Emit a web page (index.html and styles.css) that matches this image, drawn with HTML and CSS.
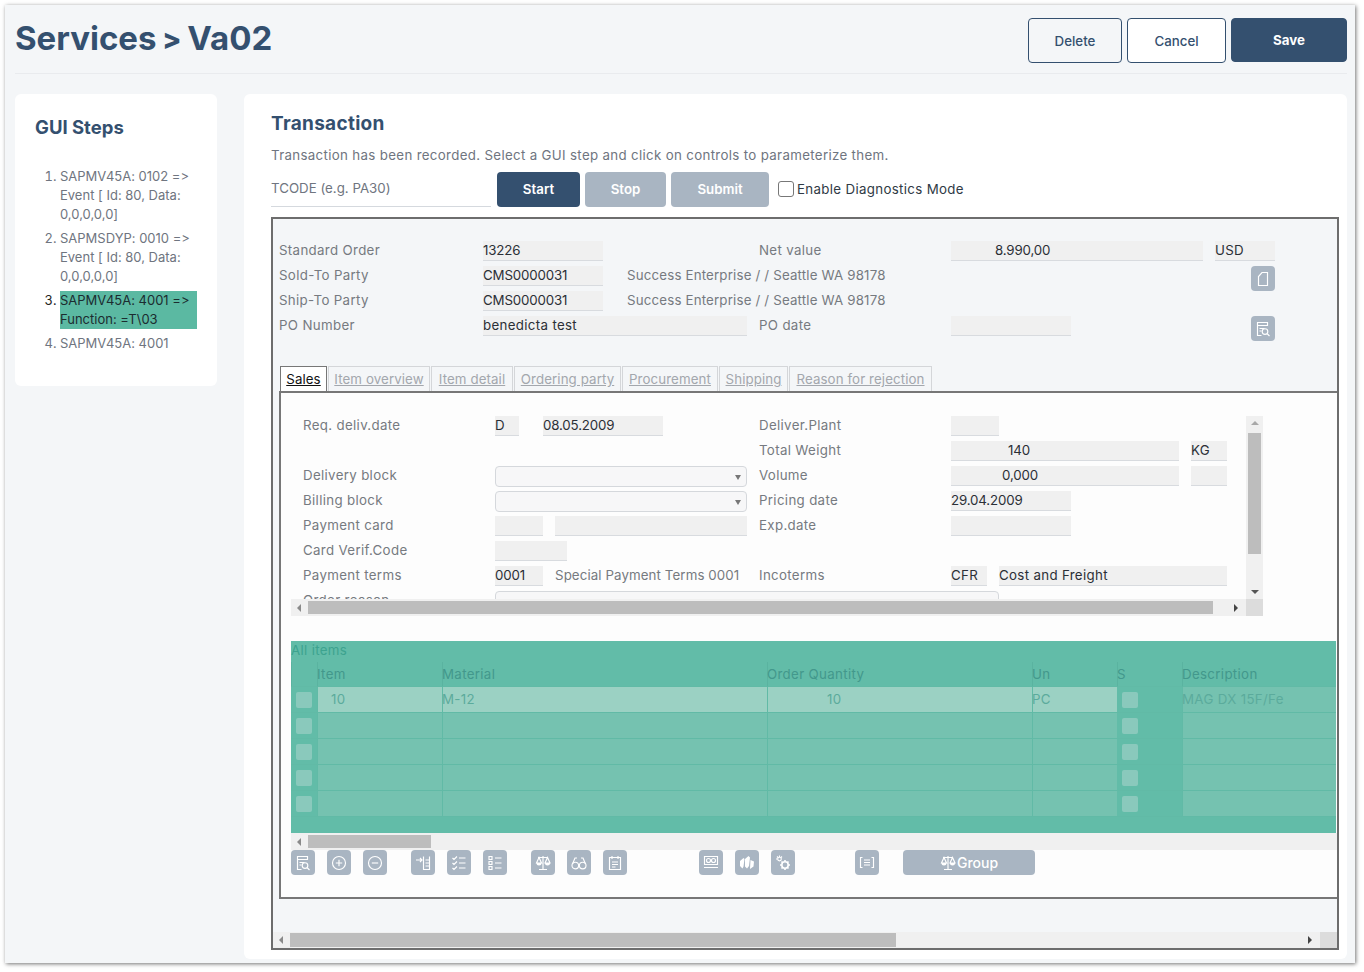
FILE: index.html
```html
<!DOCTYPE html>
<html lang="en">
<head>
    <meta charset="UTF-8">
    <title>Services > Va02</title>
    <link rel="stylesheet" href="styles.css">
</head>
<body>
    <svg class="sprites" width="0" height="0">
        <symbol id="i-doc" viewBox="0 0 16 16"><path d="M7 1.500h5.500v13h-9V5.500z"/></symbol>
        <symbol id="i-report" viewBox="0 0 16 16"><path d="M2.500 1.500h10v3h-10zM2.500 4.500v10h4M4.500 7.500h5M4.500 10h2"/><circle cx="10" cy="10.500" r="2.800"/><path d="M12 12.500l2.500 2.500"/></symbol>
        <symbol id="i-plus" viewBox="0 0 16 16"><circle cx="8" cy="8" r="6.500"/><path d="M8 4.800v6.400M4.800 8h6.400"/></symbol>
        <symbol id="i-minus" viewBox="0 0 16 16"><circle cx="8" cy="8" r="6.500"/><path d="M4.800 8h6.400"/></symbol>
        <symbol id="i-insert" viewBox="0 0 16 16"><path d="M1 5h6M5 3l2 2-2 2M8.500 1.500v13h6v-13M10.500 5h4M10.500 8h4M10.500 11h4"/></symbol>
        <symbol id="i-checks" viewBox="0 0 16 16"><path d="M1.500 3l1.500 1.500L6 1.500M1.500 8l1.500 1.500L6 6.500M1.500 13l1.500 1.500L6 11.500M8 3h6.500M8 8h6.500M8 13h6.500"/></symbol>
        <symbol id="i-bullets" viewBox="0 0 16 16"><path d="M2 1.500h3v3H2zM2 6.500h3v3H2zM2 11.500h3v3H2zM8 3h6.500M8 8h6.500M8 13h6.500"/></symbol>
        <symbol id="i-scales" viewBox="0 0 16 16"><path class="solid" d="M1.500 8h5a2.500 2.500 0 0 1-5 0zM10 8h5a2.500 2.500 0 0 1-5 0z"/><path d="M8 1v13M4 14.500h8M3 2.500h10M4 2.500L1.500 8h5zM12.500 2.500L10 8h5z"/></symbol>
        <symbol id="i-glasses" viewBox="0 0 16 16"><circle cx="4.300" cy="10.500" r="3.300"/><circle cx="11.700" cy="10.500" r="3.300"/><path d="M7.500 10c.3-.5.700-.5 1 0M1.500 9L4 3h2M14.500 9L12 3h-2"/></symbol>
        <symbol id="i-note" viewBox="0 0 16 16"><path d="M2.500 2.500h11v12h-11zM5 1v3M11 1v3M5 7h6M5 9.500h6M5 12h3.500"/></symbol>
        <symbol id="i-money" viewBox="0 0 16 16"><path d="M1.500 1.500h13v8h-13zM1 12.500h14"/><circle cx="5.500" cy="5.500" r="2"/><circle cx="10.500" cy="5.500" r="2"/></symbol>
        <symbol id="i-boxes" viewBox="0 0 16 16"><path class="solid" d="M1 6l3.500-3 1 1-1 7.500-1 2L1 11zM6 4l3.500-3 1.500 1.500-1 8.500-2 2.500L6 11.500zM11.500 5L15 6.500l-.5 5-3.500 2.500z"/></symbol>
        <symbol id="i-gears" viewBox="0 0 16 16"><circle cx="4.500" cy="4" r="1.800"/><circle class="thick" cx="10" cy="10" r="3.200"/><path class="thick" d="M10 5v1.500M10 13.500V15M5 10h1.500M13.500 10H15M6.500 6.500l1 1M12.500 12.500l1 1M13.500 6.500l-1 1M7.500 12.500l-1 1"/><path d="M4.500.5v1.500M1 4h1.500M2 1.500l1 1M7 1.500l-1 1"/></symbol>
        <symbol id="i-bracket" viewBox="0 0 16 16"><path d="M3.500 2.500H1.500v10h2M12.500 2.500h2v10h-2M5 5h6M5 7.500h6M5 10h6"/></symbol>
    </svg>

    <div class="window">
        <header class="page-header">
            <h1>Services <span class="crumb">&gt;</span> Va02</h1>
            <div class="header-actions">
                <button class="btn btn-delete">Delete</button>
                <button class="btn btn-cancel">Cancel</button>
                <button class="btn btn-save">Save</button>
            </div>
        </header>

        <div class="columns">
            <aside class="steps card">
                <h2>GUI Steps</h2>
                <ol>
                    <li>SAPMV45A: 0102 =&gt; Event [ Id: 80, Data: 0,0,0,0,0]</li>
                    <li>SAPMSDYP: 0010 =&gt; Event [ Id: 80, Data: 0,0,0,0,0]</li>
                    <li class="active"><span>SAPMV45A: 4001 =&gt; Function: =T\03</span></li>
                    <li>SAPMV45A: 4001</li>
                </ol>
            </aside>

            <main class="transaction card">
                <h2>Transaction</h2>
                <p class="hint">Transaction has been recorded. Select a GUI step and click on controls to parameterize them.</p>
                <div class="tcode-bar">
                    <div class="tcode-input">TCODE (e.g. PA30)</div>
                    <button class="btn-small start">Start</button>
                    <button class="btn-small stop">Stop</button>
                    <button class="btn-small submit">Submit</button>
                    <label class="diag"><span class="check"></span>Enable Diagnostics Mode</label>
                </div>

                <div class="sap-frame">
                    <div class="sap-head">
                        <div class="row">
                            <span class="lbl from-1 span-17">Standard Order</span>
                            <span class="fld num from-18 span-10">13226</span>
                            <span class="lbl from-41 span-16">Net value</span>
                            <span class="fld num from-57 span-21 pad-net">8.990,00</span>
                            <span class="fld from-79 span-5">USD</span>
                        </div>
                        <div class="row">
                            <span class="lbl from-1 span-17">Sold-To Party</span>
                            <span class="fld num from-18 span-10">CMS0000031</span>
                            <span class="lbl addr from-30 span-30">Success Enterprise / / Seattle WA 98178</span>
                            <button class="icon-btn from-82 span-2"><svg><use href="#i-doc"/></svg></button>
                        </div>
                        <div class="row">
                            <span class="lbl from-1 span-17">Ship-To Party</span>
                            <span class="fld num from-18 span-10">CMS0000031</span>
                            <span class="lbl addr from-30 span-30">Success Enterprise / / Seattle WA 98178</span>
                        </div>
                        <div class="row">
                            <span class="lbl from-1 span-17">PO Number</span>
                            <span class="fld from-18 span-22">benedicta test</span>
                            <span class="lbl from-41 span-16">PO date</span>
                            <span class="fld from-57 span-10"></span>
                            <button class="icon-btn from-82 span-2"><svg><use href="#i-report"/></svg></button>
                        </div>
                    </div>

                    <div class="tabs">
                        <a class="tab selected">Sales</a>
                        <a class="tab t-overview">Item overview</a>
                        <a class="tab t-detail">Item detail</a>
                        <a class="tab t-party">Ordering party</a>
                        <a class="tab t-proc">Procurement</a>
                        <a class="tab t-ship">Shipping</a>
                        <a class="tab t-reason">Reason for rejection</a>
                    </div>

                    <div class="tab-panel">
                        <div class="sub-screen">
                            <div class="sub-body">
                                <div class="row">
                                    <span class="lbl from-1 span-16">Req. deliv.date</span>
                                    <span class="fld from-17 span-2">D</span>
                                    <span class="fld num from-21 span-10">08.05.2009</span>
                                    <span class="lbl from-39 span-16">Deliver.Plant</span>
                                    <span class="fld from-55 span-4"></span>
                                </div>
                                <div class="row">
                                    <span class="lbl from-39 span-16">Total Weight</span>
                                    <span class="fld num from-55 span-19 pad-weight">140</span>
                                    <span class="fld from-75 span-3">KG</span>
                                </div>
                                <div class="row">
                                    <span class="lbl from-1 span-16">Delivery block</span>
                                    <span class="select from-17 span-21"></span>
                                    <span class="lbl from-39 span-16">Volume</span>
                                    <span class="fld num from-55 span-19 pad-volume">0,000</span>
                                    <span class="fld from-75 span-3"></span>
                                </div>
                                <div class="row">
                                    <span class="lbl from-1 span-16">Billing block</span>
                                    <span class="select from-17 span-21"></span>
                                    <span class="lbl from-39 span-16">Pricing date</span>
                                    <span class="fld num from-55 span-10">29.04.2009</span>
                                </div>
                                <div class="row">
                                    <span class="lbl from-1 span-16">Payment card</span>
                                    <span class="fld from-17 span-4"></span>
                                    <span class="fld from-22 span-16"></span>
                                    <span class="lbl from-39 span-16">Exp.date</span>
                                    <span class="fld from-55 span-10"></span>
                                </div>
                                <div class="row">
                                    <span class="lbl from-1 span-16">Card Verif.Code</span>
                                    <span class="fld from-17 span-6"></span>
                                </div>
                                <div class="row">
                                    <span class="lbl from-1 span-16">Payment terms</span>
                                    <span class="fld num from-17 span-4">0001</span>
                                    <span class="lbl tight from-22 span-17">Special Payment Terms 0001</span>
                                    <span class="lbl from-39 span-16">Incoterms</span>
                                    <span class="fld from-55 span-3">CFR</span>
                                    <span class="fld from-59 span-19">Cost and Freight</span>
                                </div>
                                <div class="row">
                                    <span class="lbl from-1 span-16">Order reason</span>
                                    <span class="select from-17 span-42"></span>
                                </div>
                            </div>
                            <div class="bar-v">
                                <span class="arrow up"></span>
                                <span class="thumb-v"></span>
                                <span class="arrow down"></span>
                            </div>
                            <div class="bar-h">
                                <span class="arrow left"></span>
                                <span class="thumb-h"></span>
                                <span class="arrow right"></span>
                            </div>
                            <div class="corner"></div>
                        </div>

                        <div class="items-wrap">
                            <div class="items">
                                <div class="items-title">All items</div>
                                <div class="item-row head">
                                    <span></span><span>Item</span><span>Material</span><span>Order Quantity</span><span>Un</span><span>S</span><span>Description</span>
                                </div>
                                <div class="item-row first">
                                    <span class="sel"><i></i></span><span class="cell lit pad-item">10</span><span class="cell lit">M-12</span><span class="cell lit pad-qty">10</span><span class="cell lit">PC</span><span class="sel"><i></i></span><span class="cell">MAG DX 15F/Fe</span>
                                </div>
                                <div class="item-row">
                                    <span class="sel"><i></i></span><span class="cell"></span><span class="cell"></span><span class="cell"></span><span class="cell"></span><span class="sel"><i></i></span><span class="cell"></span>
                                </div>
                                <div class="item-row">
                                    <span class="sel"><i></i></span><span class="cell"></span><span class="cell"></span><span class="cell"></span><span class="cell"></span><span class="sel"><i></i></span><span class="cell"></span>
                                </div>
                                <div class="item-row">
                                    <span class="sel"><i></i></span><span class="cell"></span><span class="cell"></span><span class="cell"></span><span class="cell"></span><span class="sel"><i></i></span><span class="cell"></span>
                                </div>
                                <div class="item-row">
                                    <span class="sel"><i></i></span><span class="cell"></span><span class="cell"></span><span class="cell"></span><span class="cell"></span><span class="sel"><i></i></span><span class="cell"></span>
                                </div>
                            </div>
                            <div class="items-scroll">
                                <span class="arrow left"></span>
                                <span class="thumb-items"></span>
                            </div>
                            <div class="toolbar">
                                <button class="icon-btn"><svg><use href="#i-report"/></svg></button>
                                <button class="icon-btn"><svg><use href="#i-plus"/></svg></button>
                                <button class="icon-btn"><svg><use href="#i-minus"/></svg></button>
                                <button class="icon-btn gap-1"><svg><use href="#i-insert"/></svg></button>
                                <button class="icon-btn"><svg><use href="#i-checks"/></svg></button>
                                <button class="icon-btn"><svg><use href="#i-bullets"/></svg></button>
                                <button class="icon-btn gap-1"><svg><use href="#i-scales"/></svg></button>
                                <button class="icon-btn"><svg><use href="#i-glasses"/></svg></button>
                                <button class="icon-btn"><svg><use href="#i-note"/></svg></button>
                                <button class="icon-btn gap-2"><svg><use href="#i-money"/></svg></button>
                                <button class="icon-btn"><svg><use href="#i-boxes"/></svg></button>
                                <button class="icon-btn"><svg><use href="#i-gears"/></svg></button>
                                <button class="icon-btn gap-3"><svg><use href="#i-bracket"/></svg></button>
                                <button class="icon-btn group"><svg><use href="#i-scales"/></svg>Group</button>
                            </div>
                        </div>
                    </div>

                    <div class="frame-bottom">
                        <div class="frame-scroll">
                            <span class="arrow left"></span>
                            <span class="thumb-frame"></span>
                            <span class="arrow right"></span>
                        </div>
                        <div class="corner"></div>
                    </div>
                </div>
            </main>
        </div>
    </div>
</body>
</html>
```

FILE: styles.css
```css
* {
    box-sizing: border-box;
}
body {
    margin: 0;
    padding: 5px 0 0 5px;
    height: 972px;
    overflow: hidden;
    background-color: #fff;
    font-family: Inter, "Noto Sans", sans-serif;
    font-size: 13.3px;
    font-variant-ligatures: none;
    font-feature-settings: "calt" 0;
    letter-spacing: 0.33px;
    color: #6f7580;
}
button {
    font-family: inherit;
    cursor: pointer;
}
.sprites {
    position: absolute;
}
.window {
    width: 1350px;
    height: 958px;
    padding: 0 8px 0 10px;
    background-color: #f4f6f8;
    box-shadow: 1px 1px 4px rgba(0, 0, 0, 0.55);
}
.card {
    background-color: #fff;
    border-radius: 6px;
}

/* page header */
.page-header {
    display: flex;
    justify-content: space-between;
    height: 69px;
    padding-top: 13px;
    border-bottom: 1px solid #e9ebee;
}
h1 {
    margin: 0;
    font-size: 33px;
    line-height: 40px;
    font-weight: 700;
    letter-spacing: 0;
    color: #34506f;
}
.crumb {
    margin: 0 -2px;
    font-size: 28px;
    font-weight: 800;
    vertical-align: 1px;
}
.header-actions {
    display: flex;
    gap: 5px;
}
.btn {
    height: 45px;
    font-size: 13.3px;
    font-weight: 500;
    color: #34506f;
    border: 1px solid #34506f;
    border-radius: 4px;
    background: transparent;
}
.btn-delete {
    width: 94px;
}
.btn-cancel {
    width: 99px;
    background-color: #fff;
}
.btn-save {
    width: 116px;
    height: 44px;
    font-weight: 700;
    color: #fff;
    background-color: #34506f;
}

.columns {
    display: flex;
    gap: 27px;
    margin-top: 20px;
    align-items: flex-start;
}

/* steps */
.steps {
    width: 202px;
    height: 292px;
    padding: 21px 20px 0;
}
.steps h2 {
    margin: 0 0 28px;
    font-size: 18.500px;
    line-height: 24px;
    font-weight: 700;
    letter-spacing: 0;
    color: #34506f;
}
.steps ol {
    margin: 0;
    padding: 0 0 0 25px;
}
.steps li {
    margin-bottom: 5px;
    line-height: 19px;
    font-size: 13px;
    letter-spacing: 0;
}
.steps .active {
    color: #222;
}
.steps .active span {
    display: block;
    background-color: #5bb9a2;
    color: #1c2c30;
}

/* transaction */
.transaction {
    width: 1103px;
    height: 865px;
    padding: 16px 0 0 27px;
}
.transaction h2 {
    margin: 0;
    font-size: 19px;
    line-height: 28px;
    font-weight: 700;
    letter-spacing: 0.3px;
    color: #34506f;
}
.hint {
    margin: 7px 0 0;
    line-height: 20px;
}
.tcode-bar {
    display: flex;
    align-items: center;
    height: 35px;
    margin-top: 7px;
}
.tcode-input {
    width: 220px;
    height: 35px;
    margin-right: 6px;
    padding-top: 8px;
    letter-spacing: 0;
    border-bottom: 1px solid #d5d9de;
}
.btn-small {
    height: 35px;
    margin-right: 5px;
    padding-bottom: 2px;
    font-size: 13.3px;
    font-weight: 600;
    color: #fff;
    border: 0;
    border-radius: 4px;
    background-color: #a9b5c2;
}
.start {
    width: 83px;
    background-color: #34506f;
}
.stop {
    width: 81px;
}
.submit {
    width: 98px;
}
.diag {
    display: flex;
    align-items: center;
    margin-left: 4px;
    padding-bottom: 2px;
    color: #2f3a45;
}
.check {
    width: 16px;
    height: 16px;
    margin-right: 3px;
    border: 1px solid #777;
    border-radius: 3px;
    background-color: #fff;
}

/* SAP frame */
.sap-frame {
    width: 1068px;
    height: 733px;
    margin-top: 10px;
    border: 2px solid #6d6d6d;
    background-color: #f4f6f8;
}
.sap-head {
    padding: 22px 0 0 6px;
    height: 147px;
}
.row {
    display: grid;
    grid-template-columns: repeat(84, 12px);
    height: 25px;
}
.row > * {
    height: 20px;
    line-height: 18px;
    grid-row: 1;
    white-space: nowrap;
}
.lbl {
    color: #767a80;
}
.lbl.addr {
    letter-spacing: 0.17px;
}
.lbl.tight {
    letter-spacing: 0.1px;
}
.fld {
    color: #2b2f36;
    background-color: #f0f0f0;
    border-bottom: 1px solid #d8dbdf;
}
.fld.num {
    letter-spacing: -0.15px;
}
.select {
    height: 21px;
    border: 1px solid #d5d8dc;
    border-radius: 4px;
    background-color: #f7f7f8;
    position: relative;
}
.select::after {
    content: "";
    position: absolute;
    right: 5px;
    top: 8px;
    border: 3.5px solid transparent;
    border-top: 5px solid #777;
    border-bottom: 0;
}
.pad-net {
    padding-left: 44px;
}
.pad-weight {
    padding-left: 57px;
}
.pad-volume {
    padding-left: 51px;
}

.from-1 { grid-column-start: 1; }
.from-17 { grid-column-start: 17; }
.from-18 { grid-column-start: 18; }
.from-21 { grid-column-start: 21; }
.from-22 { grid-column-start: 22; }
.from-30 { grid-column-start: 30; }
.from-39 { grid-column-start: 39; }
.from-41 { grid-column-start: 41; }
.from-55 { grid-column-start: 55; }
.from-57 { grid-column-start: 57; }
.from-59 { grid-column-start: 59; }
.from-75 { grid-column-start: 75; }
.from-79 { grid-column-start: 79; }
.from-82 { grid-column-start: 82; }
.span-2 { grid-column-end: span 2; }
.span-3 { grid-column-end: span 3; }
.span-4 { grid-column-end: span 4; }
.span-5 { grid-column-end: span 5; }
.span-6 { grid-column-end: span 6; }
.span-10 { grid-column-end: span 10; }
.span-16 { grid-column-end: span 16; }
.span-17 { grid-column-end: span 17; }
.span-19 { grid-column-end: span 19; }
.span-21 { grid-column-end: span 21; }
.span-22 { grid-column-end: span 22; }
.span-30 { grid-column-end: span 30; }
.span-42 { grid-column-end: span 42; }

/* icon buttons */
.icon-btn {
    width: 24px;
    height: 25px;
    padding: 0;
    display: flex;
    align-items: center;
    justify-content: center;
    border: 0;
    border-radius: 4px;
    background-color: #a9b5c2;
}
.row > .icon-btn {
    height: 25px;
}
.icon-btn svg {
    width: 16px;
    height: 16px;
    fill: none;
    stroke: #fff;
    stroke-width: 1.15;
}
.solid {
    fill: #fff;
    stroke: none;
}
.thick {
    stroke-width: 1.6;
}

/* tabs */
.tabs {
    display: flex;
    height: 25px;
    padding-left: 7px;
}
.tab {
    height: 25px;
    line-height: 24px;
    margin-right: 1px;
    text-align: center;
    letter-spacing: 0.1px;
    color: #a3a7ad;
    text-decoration: underline;
    border: 1px solid #d4d6d9;
    border-bottom: 0;
    white-space: nowrap;
}
.tab.selected {
    width: 47px;
    color: #111;
    background-color: #fff;
    border-color: #777;
}
.t-overview { width: 102px; }
.t-detail { width: 82px; }
.t-party { width: 107px; }
.t-proc { width: 96px; }
.t-ship { width: 69px; }
.t-reason { width: 143px; }

.tab-panel {
    width: 1058px;
    height: 508px;
    margin-left: 6px;
    padding-top: 23px;
    background-color: #fdfdfd;
    border: 2px solid #777;
    border-right: 0;
}

/* scrolling subscreen */
.sub-screen {
    display: grid;
    grid-template-columns: 955px 17px;
    grid-template-rows: 183px 17px;
    width: 972px;
    margin-left: 10px;
}
.sub-body {
    padding-left: 12px;
    overflow: hidden;
}
.bar-v {
    display: flex;
    flex-direction: column;
    align-items: center;
    justify-content: space-between;
    padding: 5px 0;
    background-color: #f0f0f0;
}
.thumb-v {
    width: 13px;
    height: 121px;
    margin-top: -3px;
    margin-bottom: 25px;
    background-color: #bdbdbd;
}
.bar-h,
.items-scroll,
.frame-scroll {
    display: flex;
    align-items: center;
    background-color: #f0f0f0;
}
.bar-h {
    padding: 0 8px 0 6px;
}
.thumb-h {
    width: 905px;
    height: 13px;
    margin: 0 auto 0 7px;
    background-color: #bdbdbd;
}
.corner {
    background-color: #dcdcdc;
}
.arrow {
    width: 0;
    height: 0;
    border: 4px solid transparent;
}
.arrow.up {
    border-top: 0;
    border-bottom-color: #a8a8a8;
}
.arrow.down {
    border-bottom: 0;
    border-top-color: #555;
}
.arrow.left {
    border-left: 0;
    border-right-color: #8a8a8a;
}
.arrow.right {
    border-right: 0;
    border-left-color: #444;
}

/* items table */
.items-wrap {
    margin: 25px 0 0 10px;
}
.items {
    width: 1045px;
    height: 192px;
    background-color: #62bca8;
    color: #3f9d8f;
}
.items-title {
    height: 21px;
    line-height: 18px;
    color: #3da38f;
}
.item-row {
    display: grid;
    grid-template-columns: 26px 125px 325px 265px 85px 65px 154px;
    height: 26px;
}
.item-row.head {
    height: 25px;
    color: #43988c;
    line-height: 24px;
}
.item-row.head span {
    border-left: 1px solid #5ab3a0;
    text-indent: -1px;
}
.item-row span {
    border-bottom: 1px solid #61baa6;
}
.cell {
    line-height: 24px;
    text-indent: -1px;
    color: #5bab9c;
    background-color: #75c2b0;
    border-left: 1px solid #61baa6;
}
.cell.lit {
    background-color: #9bd1c3;
}
.pad-item {
    padding-left: 14px;
}
.pad-qty {
    padding-left: 60px;
}
.sel {
    display: flex;
    align-items: center;
    padding-left: 5px;
    background-color: #62bca8;
}
.sel i {
    width: 16px;
    height: 16px;
    background-color: #8ac9bc;
    border-radius: 2px;
}
.items-scroll {
    height: 17px;
    padding-left: 6px;
}
.thumb-items {
    width: 123px;
    height: 13px;
    margin-left: 7px;
    background-color: #bdbdbd;
}
.toolbar {
    display: flex;
    gap: 12px;
}
.gap-1 {
    margin-left: 12px;
}
.gap-2 {
    margin-left: 60px;
}
.gap-3 {
    margin-left: 48px;
}
.icon-btn.group {
    width: 132px;
    margin-left: 12px;
    gap: 1px;
    font-size: 14px;
    font-weight: 500;
    letter-spacing: 0;
    color: #fff;
}

/* outer scrollbar */
.frame-bottom {
    display: flex;
    height: 16px;
    margin-top: 33px;
}
.frame-scroll {
    width: 1047px;
    padding-left: 6px;
}
.frame-bottom .corner {
    width: 17px;
}
.thumb-frame {
    width: 606px;
    height: 14px;
    margin: 0 auto 0 7px;
    background-color: #bdbdbd;
}
.frame-scroll .arrow.right {
    margin-right: 8px;
}
```
